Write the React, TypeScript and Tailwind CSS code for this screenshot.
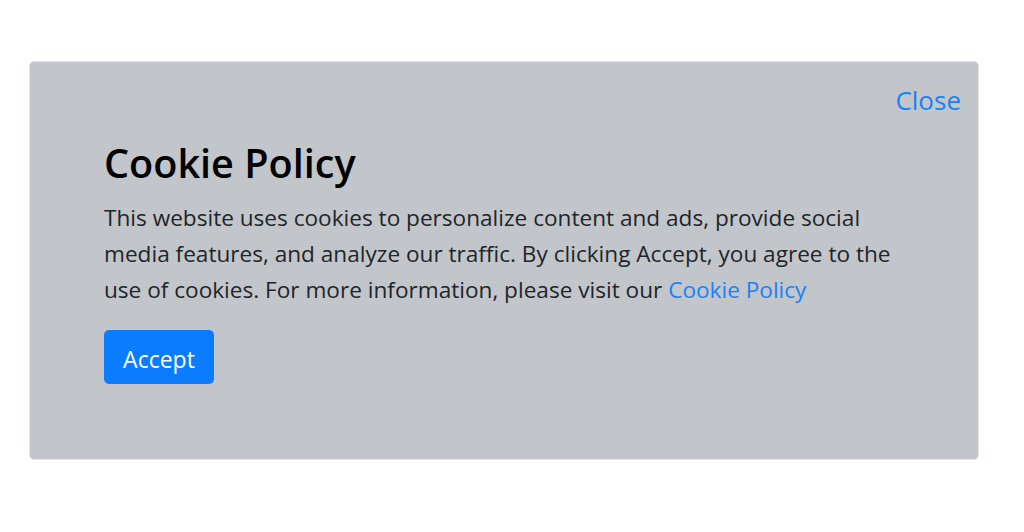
import React from "react";

export default function App() {
  return (
    <div
      className="w-full h-[532px] bg-white pt-[61px] pl-[29px]"
      style={{ fontFamily: '"Open Sans", "Noto Sans", sans-serif' }}
    >
      <div className="relative w-[950px] h-[399px] bg-[#c2c5ca] rounded-[5px] border border-[#e4e5e7] pl-[74px] pt-[78px]">
        <a
          href="#"
          className="absolute right-[17px] top-[18px] text-[26px] leading-[40px] text-[#1a82f7] no-underline"
        >
          Close
        </a>
        <h3 className="text-[39.6px] leading-[47px] font-semibold text-black m-0">Cookie Policy</h3>
        <p className="mt-[13px] text-[22.6px] leading-[36px] text-[#212529]">
          This website uses cookies to personalize content and ads, provide social
          <br />
          media features, and analyze our traffic. By clicking Accept, you agree to the
          <br />
          use of cookies. For more information, please visit our{" "}
          <a href="#" className="text-[#1a82f7] no-underline">
            Cookie Policy
          </a>
        </p>
        <button className="mt-[22px] w-[110px] h-[54px] pt-[3px] rounded-[5px] bg-[#0a7cff] text-white text-[23px] leading-[36px] flex items-center justify-center">
          Accept
        </button>
      </div>
    </div>
  );
}
